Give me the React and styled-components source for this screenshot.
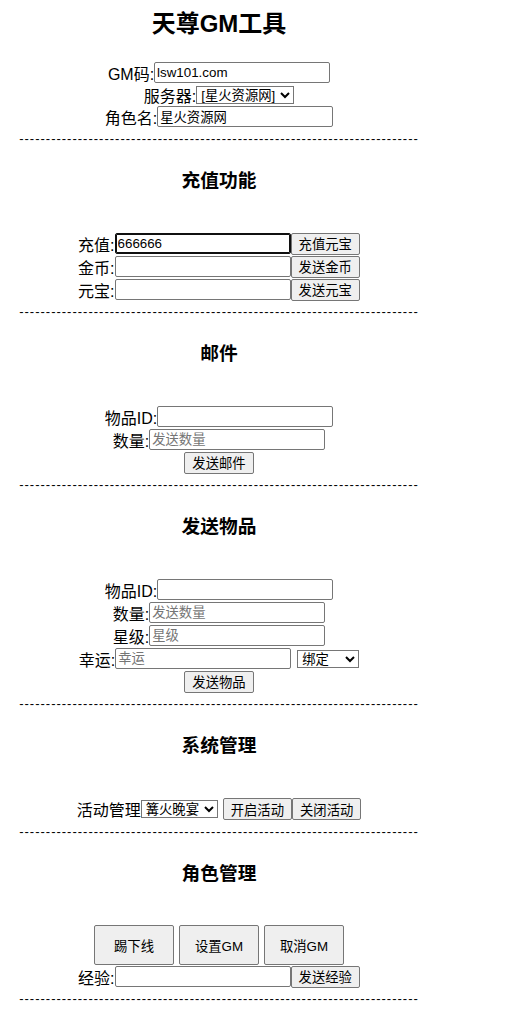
import React from "react"
import styled, { createGlobalStyle } from "styled-components"

const fontStack = `"Liberation Sans", "Noto Sans CJK SC", sans-serif`

const GlobalStyle = createGlobalStyle`
  body {
    margin: 8px;
    background: #fff;
    color: #000;
    font-family: ${fontStack};
    font-size: 16px;
  }
`

const Page = styled.div`
  width: 422px;
  text-align: center;
`

const Title = styled.h2`
  margin: 0 0 21px;
  font-size: 24px;
  line-height: 32px;
  font-weight: bold;
`

const SectionTitle = styled.h3`
  margin: 22px 0 39px;
  font-size: 18.72px;
  line-height: 24px;
  font-weight: bold;
`

const Row = styled.div`
  display: flex;
  justify-content: center;
  align-items: center;
  gap: ${p => p.$gap || 0}px;
  height: ${p => p.$h || 23}px;
`

const Label = styled.span`
  font-size: 16px;
  white-space: nowrap;
`

const TextInput = styled.input`
  box-sizing: border-box;
  width: 176px;
  height: 21px;
  margin: 0;
  padding: 1px 2px;
  border: 1px solid ${p => (p.$focused ? "#101010" : "#767676")};
  border-radius: 2px;
  box-shadow: ${p => (p.$focused ? "inset 0 0 0 1px #101010" : "none")};
  background: #fff;
  font: 13.33px ${fontStack};
  color: #000;
  outline: none;

  &::placeholder {
    color: #757575;
  }
`

const Button = styled.button`
  box-sizing: border-box;
  height: ${p => (p.$big ? 40 : 22)}px;
  width: ${p => (p.$big ? "80px" : "auto")};
  margin: 0 0 0 ${p => p.$ml || 0}px;
  padding: 0 7px;
  border: 1px solid #767676;
  border-radius: 2px;
  background: #efefef;
  font: 13.33px ${fontStack};
  color: #000;
  white-space: nowrap;
`

const Select = styled.select`
  box-sizing: border-box;
  width: ${p => p.$w}px;
  height: 18px;
  margin: 0 0 0 ${p => p.$ml || 0}px;
  padding: 0;
  border: 1px solid #767676;
  border-radius: 0;
  background: #fff;
  font: 13.33px ${fontStack};
  color: #000;
`

// the separator is a line of typed hyphens, not a border
const Divider = styled.div`
  margin-top: 1px;
  height: 18px;
  line-height: 20px;
  font-size: 13px;
  letter-spacing: 1px;
  white-space: nowrap;
  overflow: hidden;
`

const Dashes = () => <Divider>{"-".repeat(75)}</Divider>

const Field = ({ label, placeholder, value, focused }) => (
  <Row>
    <Label>{label}</Label>
    <TextInput
      type="text"
      placeholder={placeholder}
      defaultValue={value}
      $focused={focused}
    />
  </Row>
)

const FieldWithButton = ({ label, button, value, focused }) => (
  <Row>
    <Label>{label}</Label>
    <TextInput type="text" defaultValue={value} $focused={focused} />
    <Button>{button}</Button>
  </Row>
)

const App = () => (
  <Page>
    <GlobalStyle />
    <Title>天尊GM工具</Title>

    <Field label="GM码:" value="lsw101.com" />
    <Row $h={21}>
      <Label>服务器:</Label>
      <Select $w={98} defaultValue="xh">
        <option value="xh">[星火资源网]</option>
      </Select>
    </Row>
    <Field label="角色名:" value="星火资源网" />
    <Dashes />

    <SectionTitle>充值功能</SectionTitle>
    <FieldWithButton label="充值:" button="充值元宝" value="666666" focused />
    <FieldWithButton label="金币:" button="发送金币" />
    <FieldWithButton label="元宝:" button="发送元宝" />
    <Dashes />

    <SectionTitle>邮件</SectionTitle>
    <Field label="物品ID:" />
    <Field label="数量:" placeholder="发送数量" />
    <Row>
      <Button>发送邮件</Button>
    </Row>
    <Dashes />

    <SectionTitle>发送物品</SectionTitle>
    <Field label="物品ID:" />
    <Field label="数量:" placeholder="发送数量" />
    <Field label="星级:" placeholder="星级" />
    <Row>
      <Label>幸运:</Label>
      <TextInput type="text" placeholder="幸运" />
      <Select $w={62} $ml={6} defaultValue="1">
        <option value="1">绑定</option>
        <option value="0">不绑定</option>
      </Select>
    </Row>
    <Row>
      <Button>发送物品</Button>
    </Row>
    <Dashes />

    <SectionTitle>系统管理</SectionTitle>
    <Row $h={24}>
      <Label>活动管理</Label>
      <Select $w={77} defaultValue="gh">
        <option value="gh">篝火晚宴</option>
      </Select>
      <Button $ml={5}>开启活动</Button>
      <Button>关闭活动</Button>
    </Row>
    <Dashes />

    <SectionTitle>角色管理</SectionTitle>
    <Row $h={40} $gap={5}>
      <Button $big>踢下线</Button>
      <Button $big>设置GM</Button>
      <Button $big>取消GM</Button>
    </Row>
    <FieldWithButton label="经验:" button="发送经验" />
    <Dashes />
  </Page>
)

export default App
